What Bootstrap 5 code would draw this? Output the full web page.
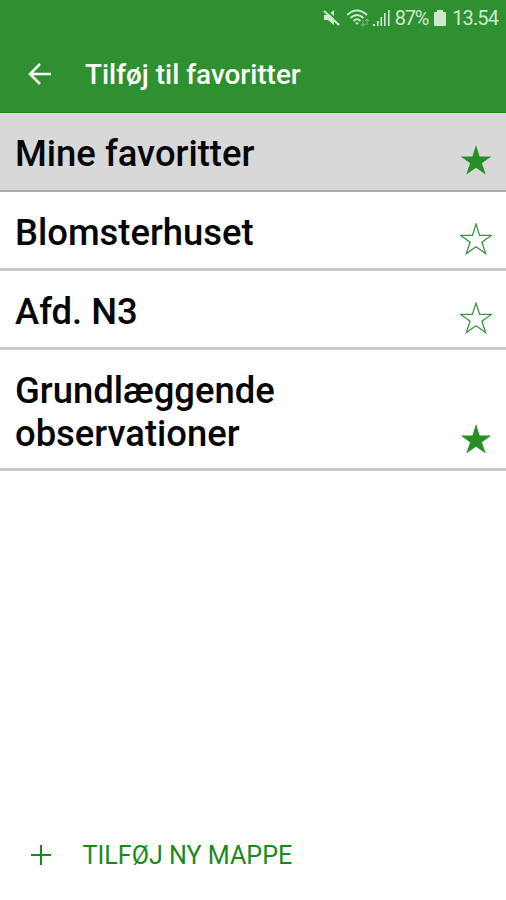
<!DOCTYPE html>
<html lang="da">
<head>
<meta charset="utf-8">
<meta name="viewport" content="width=device-width, initial-scale=1">
<title>Tilføj til favoritter</title>
<link href="https://cdn.jsdelivr.net/npm/bootstrap@5.3.0/dist/css/bootstrap.min.css" rel="stylesheet">
<style>
body{font-family:Roboto,sans-serif;color:#050505}
.app{height:900px}
.topbar{height:113px;background:#2f9031;border-bottom:1px solid #188a1b}
.status{height:36px;padding-right:8px;color:#cfe9cf;font-size:20px;line-height:36px}
.status span{letter-spacing:-.9px}
.status .pct{letter-spacing:-1.2px;margin-left:5px}
.wifi{margin-left:7px}
.signal{margin-left:3px}
.battery{margin:0 6px}
.titlebar{height:76px;padding-left:28px}
.title{font-size:27.9px;font-weight:500;line-height:32px;margin-left:34px;padding-top:1px;white-space:nowrap}
.list-group-flush>.fav.list-group-item{border:0;border-bottom:3px solid #cbcbcb;padding:19px 14px 13px 15px;height:79px;color:#050505;background:#fff}
.list-group-flush>.fav.chosen.list-group-item{background:#d8d8d8;border-bottom:2px solid #acacac;padding-bottom:14px}
.list-group-flush>.fav.tall.list-group-item{height:121px;padding-top:18.5px}
.fav-name{font-size:36.4px;line-height:43px;font-weight:500;white-space:nowrap}
.star{width:32px;height:32px;fill:#269026}
.star.hollow{fill:none;stroke:#3c983f;stroke-width:1.3}
.add-folder{color:#188a1b;font-size:25.1px;line-height:30px;padding:0 0 29px 31px}
.add-label{margin-left:31.5px;padding-top:1px;white-space:nowrap}
.plus{margin-bottom:1px}
</style>
<script src="https://cdn.jsdelivr.net/npm/bootstrap@5.3.0/dist/js/bootstrap.bundle.min.js"></script>
</head>
<body class="m-0 bg-white">
<svg class="d-none" aria-hidden="true"><symbol id="star-shape" viewBox="0 0 32 32"><path d="M16 1L19.6 12.4H31.3L21.9 19.3L25.7 30.6L16 23.7L6.3 30.6L10.1 19.3L.7 12.4H12.4Z"/></symbol></svg>
<div class="app d-flex flex-column">
<header class="topbar text-white flex-shrink-0">
  <div class="status d-flex justify-content-end align-items-center">
    <svg width="17" height="18" viewBox="0 0 17 18"><path d="M1 6h4l6-5v15l-6-5H1z" fill="#cfe9cf"/><path d="M2 0l15 14" stroke="#2f9031" stroke-width="2"/><path d="M1 2l15 14" stroke="#cfe9cf" stroke-width="2.2"/></svg>
    <svg class="wifi" width="23" height="18" viewBox="0 0 23 18" fill="none" stroke="#cfe9cf" stroke-width="1.8"><path d="M0 6Q10-3 20 6M3.5 9Q10 3 16.5 9M6.5 12Q10 8.5 13.5 12"/><path d="M8 13.5h4L10 16z" fill="#cfe9cf" stroke="none"/><path d="M16 11v6m-2-2l2 2 2-2M20 16v-6m-2 2l2-2 2 2" stroke="#7fbd80" stroke-width="1"/></svg>
    <svg class="signal" width="17" height="18" viewBox="0 0 17 18" fill="#cfe9cf"><path d="M0 15h2v2H0zM4 12h1.600v5H4zM7.500 8h1.600v9H7.500zM11 4h1.600v13H11zM15 1h1.600v16H15z"/></svg>
    <span class="pct">87%</span>
    <svg class="battery" width="12" height="18" viewBox="0 0 12 18" fill="#cfe9cf"><path d="M3 1h6v2h2q1 0 1 1v12q0 1-1 1H1q-1 0-1-1V4q0-1 1-1h2z"/></svg>
    <span class="clock">13.54</span>
  </div>
  <div class="titlebar d-flex align-items-center">
    <svg width="23" height="22" viewBox="0 0 23 22" fill="none" stroke="#fff" stroke-width="2.5"><path d="M12 1L2 11l10 10M2 11h21"/></svg>
    <h1 class="title mb-0">Tilføj til favoritter</h1>
  </div>
</header>
<main class="list-group list-group-flush flex-grow-1">
  <div class="list-group-item fav chosen d-flex justify-content-between align-items-end"><span class="fav-name align-self-start">Mine favoritter</span><svg class="star"><use href="#star-shape"/></svg></div>
  <div class="list-group-item fav d-flex justify-content-between align-items-end"><span class="fav-name align-self-start">Blomsterhuset</span><svg class="star hollow"><use href="#star-shape"/></svg></div>
  <div class="list-group-item fav d-flex justify-content-between align-items-end"><span class="fav-name align-self-start">Afd. N3</span><svg class="star hollow"><use href="#star-shape"/></svg></div>
  <div class="list-group-item fav tall d-flex justify-content-between align-items-end"><span class="fav-name align-self-start">Grundlæggende<br>observationer</span><svg class="star"><use href="#star-shape"/></svg></div>
</main>
<footer class="add-folder d-flex align-items-center">
  <svg class="plus" width="20" height="20" viewBox="0 0 20 20" stroke="#188a1b" stroke-width="2"><path d="M10 0v20M0 10h20"/></svg>
  <span class="add-label">TILFØJ NY MAPPE</span>
</footer>
</div>
</body>
</html>
